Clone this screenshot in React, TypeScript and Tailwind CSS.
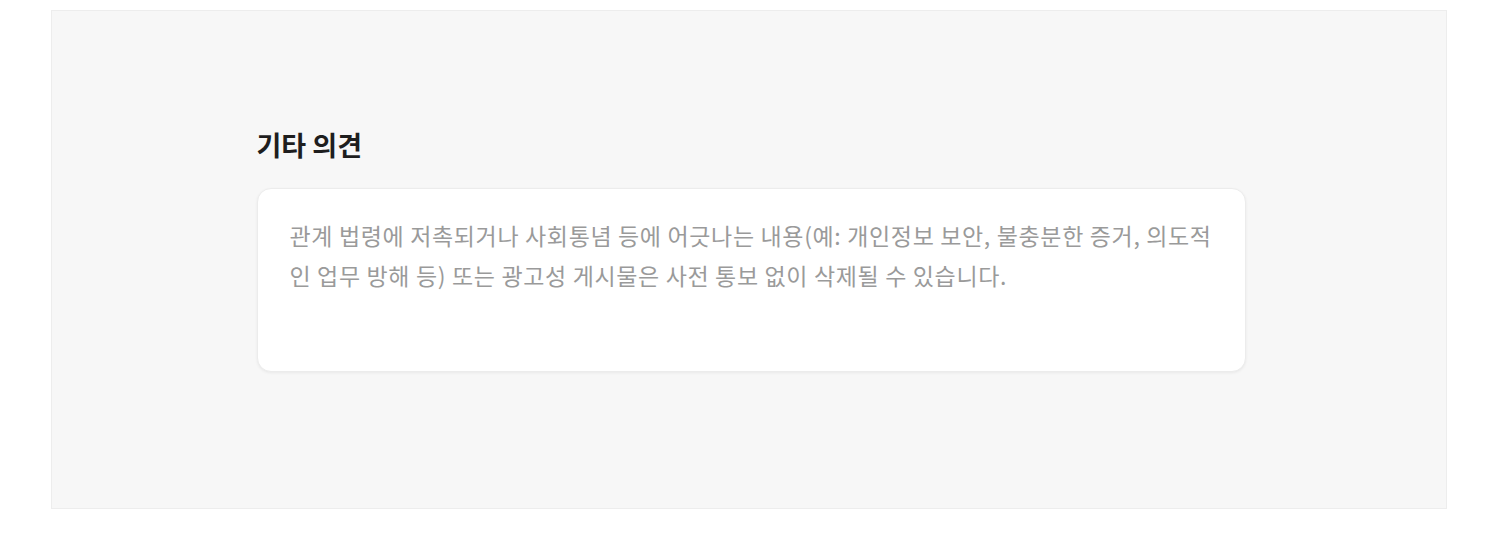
export default function App() {
  return (
    <div className="min-h-[538px] bg-white pt-[10px] font-['Noto_Sans_CJK_KR','Noto_Sans',sans-serif]">
      <section className="mx-[51px] w-[1396px] h-[499px] border border-[#ededed] bg-[#f7f7f7] pt-[116px]">
        <div className="mx-auto w-[989px] translate-x-[2px]">
          <h3 className="text-[27px] leading-[36px] font-bold text-[#1e1e1e]">기타 의견</h3>
          <div className="mt-[25px] h-[184px] rounded-[14px] border border-[#ececec] bg-white px-[32px] pt-[26px] shadow-[0_1px_3px_rgba(0,0,0,0.06)]">
            <p className="text-[23px] leading-[40px] tracking-[0.65px] break-all text-[#9a9a9a]">
              관계 법령에 저촉되거나 사회통념 등에 어긋나는 내용(예: 개인정보 보안, 불충분한 증거, 의도적인 업무 방해 등) 또는 광고성 게시물은 사전 통보 없이 삭제될 수 있습니다.
            </p>
          </div>
        </div>
      </section>
    </div>
  );
}
